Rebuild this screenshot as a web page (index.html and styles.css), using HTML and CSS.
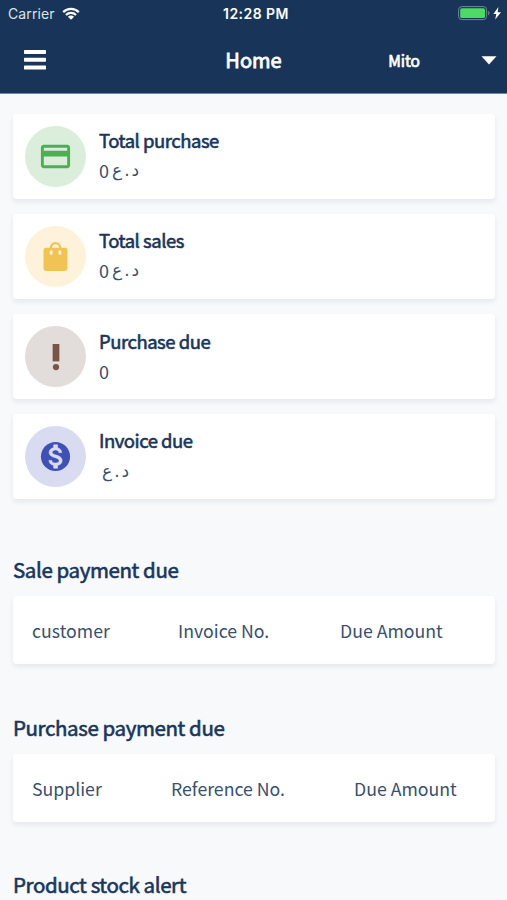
FILE: index.html
```html
<!DOCTYPE html>
<html lang="en">
<head>
<meta charset="utf-8">
<meta name="viewport" content="width=device-width, initial-scale=1">
<title>Home</title>
<link rel="stylesheet" href="styles.css">
</head>
<body>
<header class="header">
  <div class="status">
    <div class="carrier"><span class="carrier-name">Carrier</span>
      <svg class="wifi" viewBox="0 0 18 13"><g fill="none" stroke="#fff" stroke-width="2.2"><path d="M1.2 5.1A11 11 0 0 1 16.800 5.1"/><path d="M4 8A7.1 7.1 0 0 1 14 8"/></g><path fill="#fff" d="M5.900 9.700A4.400 4.400 0 0 1 12.100 9.700L9 12.800Z"/></svg>
    </div>
    <span class="clock">12:28 PM</span>
    <svg class="battery" viewBox="0 0 44 15"><rect x=".6" y=".6" width="28" height="13" rx="3.2" fill="none" stroke="#71869a" stroke-width="1"/><rect x="2.2" y="2.2" width="24.8" height="9.8" rx="1.6" fill="#4cd964"/><path d="M30.2 4.8C32 5.6 32 8.6 30.2 9.4Z" fill="#71869a"/><path d="M40.4 1 35.400 8H38.300L37.200 13.600 43 6.200H39.700Z" fill="#fff"/></svg>
  </div>
  <nav class="nav">
    <svg class="menu" viewBox="0 0 22 20"><path fill="#fff" d="M.7 0H21.3Q22 0 22 .7V3.3Q22 4 21.3 4H.7Q0 4 0 3.3V.7Q0 0 .7 0ZM.7 7.8H21.3Q22 7.8 22 8.5V11.1Q22 11.8 21.3 11.8H.7Q0 11.8 0 11.1V8.5Q0 7.8 .7 7.8ZM.7 15.6H21.3Q22 15.6 22 16.3V18.9Q22 19.6 21.3 19.6H.7Q0 19.6 0 18.9V16.3Q0 15.6 .7 15.6Z"/></svg>
    <h1 class="title">Home</h1>
    <div class="location"><span>Mito</span><svg class="caret" viewBox="0 0 16 9"><path d="M.5.3H15.5L8 8.5Z" fill="#fff"/></svg></div>
  </nav>
</header>
<main class="content">
  <section class="cards">
    <article class="card">
      <div class="badge green"><svg viewBox="0 0 24 24"><path fill="#4caf50" d="M20 4H4c-1.110 0-1.990.890-1.990 2L2 18c0 1.110.890 2 2 2h16c1.110 0 2-.890 2-2V6c0-1.110-.890-2-2-2zm0 14H4v-6h16v6zm0-10H4V6h16v2z"/></svg></div>
      <div class="info"><h2 class="label">Total purchase</h2><p class="value">0<span class="currency" dir="rtl" lang="ar"><span>د</span><span>.</span><span>ع</span></span></p></div>
    </article>
    <article class="card">
      <div class="badge yellow"><svg viewBox="0 0 24 24"><path fill="#f1c354" d="M12 2a4 4 0 0 0-4 4H5.500Q3.800 6 3.800 7.700V20.300Q3.800 22 5.500 22H18.500Q20.200 22 20.200 20.300V7.700Q20.200 6 18.500 6H16a4 4 0 0 0-4-4Z"/><path fill="#fff2da" d="M12 3.600A2.400 2.400 0 0 0 9.600 6h4.800A2.400 2.400 0 0 0 12 3.600Z"/><path d="M9 8.700v1.200M15 8.700v1.200" stroke="#fff2da" stroke-width="1.900" stroke-linecap="round"/></svg></div>
      <div class="info"><h2 class="label">Total sales</h2><p class="value">0<span class="currency" dir="rtl" lang="ar"><span>د</span><span>.</span><span>ع</span></span></p></div>
    </article>
    <article class="card">
      <div class="badge brown"><svg viewBox="0 0 24 24"><path fill="#795548" d="M9.300 1.600H14.700V15.500H9.300Z"/><circle cx="12" cy="20" r="2.500" fill="#795548"/></svg></div>
      <div class="info lower"><h2 class="label">Purchase due</h2><p class="value">0</p></div>
    </article>
    <article class="card">
      <div class="badge blue"><svg viewBox="0 0 24 24"><path fill="#3f51b5" d="M12 2C6.480 2 2 6.480 2 12s4.480 10 10 10 10-4.480 10-10S17.520 2 12 2z"/><path fill="#d9dcf0" stroke="#d9dcf0" stroke-width=".4" d="M13.410 18.090V20h-2.670v-1.930c-1.710-.360-3.160-1.460-3.270-3.400h1.960c.1 1.050.820 1.870 2.650 1.870 1.960 0 2.400-.980 2.400-1.590 0-.830-.440-1.610-2.670-2.140-2.480-.6-4.180-1.620-4.180-3.670 0-1.720 1.390-2.840 3.110-3.210V4h2.670v1.950c1.860.450 2.790 1.860 2.850 3.390H14.300c-.050-1.110-.640-1.870-2.220-1.870-1.500 0-2.400.680-2.400 1.640 0 .840.650 1.390 2.670 1.910s4.180 1.390 4.180 3.910c-.010 1.830-1.380 2.830-3.120 3.160z"/></svg></div>
      <div class="info"><h2 class="label">Invoice due</h2><p class="value bare"><span class="currency" dir="rtl" lang="ar"><span>د</span><span>.</span><span>ع</span></span></p></div>
    </article>
  </section>
  <section class="report">
    <h2 class="heading">Sale payment due</h2>
    <div class="row sale"><span>customer</span><span>Invoice No.</span><span>Due Amount</span></div>
  </section>
  <section class="report">
    <h2 class="heading">Purchase payment due</h2>
    <div class="row purchase"><span>Supplier</span><span>Reference No.</span><span>Due Amount</span></div>
  </section>
  <section class="report">
    <h2 class="heading">Product stock alert</h2>
  </section>
</main>
</body>
</html>
```
FILE: styles.css
```css
* { box-sizing: border-box; }
html, body { height: 100%; overflow: hidden; }
body {
  margin: 0;
  background: #f8f9fb;
  color: #18365b;
  font-family: "Noto Sans CJK SC", "Noto Sans", sans-serif;
}
h1, h2, p { margin: 0; font-weight: 400; }
svg { display: block; flex: none; }
.header {
  height: 94px;
  background: #183559;
  border-bottom: 1px solid #7186a0;
  color: #fff;
}
.status {
  display: grid;
  grid-template-columns: 1fr auto 1fr;
  align-items: center;
  height: 27px;
  padding: 0 5px 0 8px;
  font-family: Inter, sans-serif;
}
.carrier { display: flex; align-items: center; gap: 7px; }
.carrier-name { font-size: 14px; color: #dbe3eb; letter-spacing: 0.1px; }
.wifi { width: 18px; height: 13px; }
.clock { margin-left: 2px; font-size: 14px; font-weight: 600; letter-spacing: 0.45px; }
.battery { width: 44px; height: 15px; justify-self: end; }
.nav {
  display: grid;
  grid-template-columns: 1fr auto 1fr;
  align-items: center;
  height: 66px;
  padding: 0 10px 0 24px;
}
.menu { width: 22px; height: 20px; }
.title { margin: 0 7px 0 -7px; font-size: 20px; line-height: 30px; -webkit-text-stroke: 0.8px; }
.location {
  display: flex;
  align-items: center;
  justify-content: flex-end;
  gap: 61px;
  font-size: 15.5px;
  -webkit-text-stroke: 0.7px;
}
.caret { width: 16px; height: 9px; }
.content { padding: 20px 12px 0 13px; }
.cards { display: grid; gap: 15px; }
.card, .row {
  background: #fff;
  border-radius: 4px;
  box-shadow: 0 3px 5px rgba(24, 40, 60, 0.08);
}
.card { display: flex; align-items: center; height: 85px; padding-left: 12px; }
.badge {
  display: grid;
  place-items: center;
  width: 61px;
  height: 61px;
  border-radius: 50%;
}
.badge svg { width: 35px; height: 35px; }
.green { background: #daeedb; }
.yellow { background: #fff2da; }
.brown { background: #e2dcda; }
.blue { background: #d9dcf0; }
.brown svg { width: 30px; height: 30px; }
.info { margin-left: 13px; padding-bottom: 2px; }
.lower { padding-bottom: 0; }
.label { font-size: 18.5px; line-height: 30px; letter-spacing: -0.48px; -webkit-text-stroke: 0.6px; }
.value {
  display: flex;
  align-items: center;
  gap: 3px;
  height: 31px;
  color: #38506f;
  font-size: 18px;
  line-height: 31px;
}
.bare { padding: 2px 0 0 3px; }
.currency {
  display: flex;
  gap: 2px;
  font-family: "DejaVu Sans", sans-serif;
  font-size: 17px;
}
.report { padding-top: 54px; }
.report + .report { padding-top: 47px; }
.report:last-child { padding-top: 46px; }
.heading { font-size: 20.5px; line-height: 32px; letter-spacing: -0.4px; margin-bottom: 11px; -webkit-text-stroke: 0.6px; }
.row {
  display: grid;
  align-items: center;
  height: 68px;
  padding: 0 0 1px 19px;
  color: #38506f;
  font-size: 17.7px;
}
.sale { grid-template-columns: 146px 162px 1fr; }
.purchase { grid-template-columns: 139px 183px 1fr; }
```
